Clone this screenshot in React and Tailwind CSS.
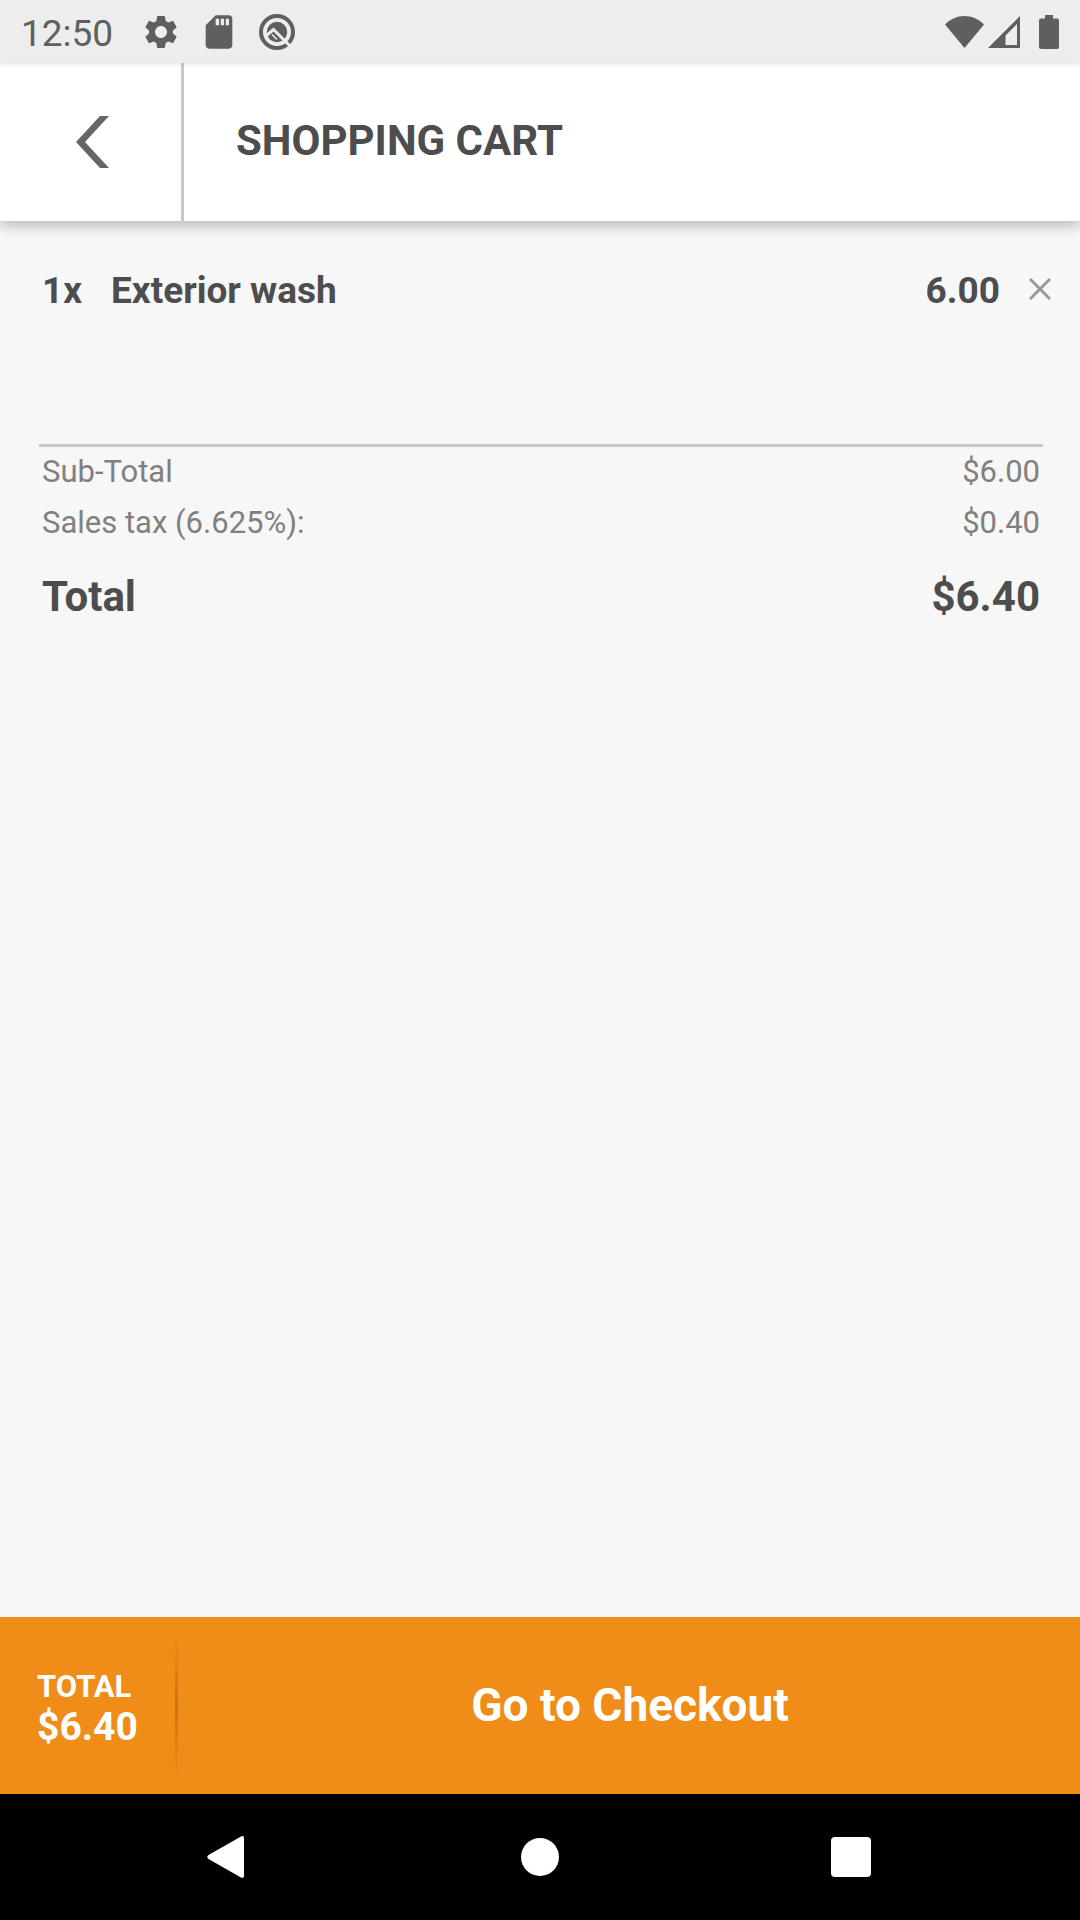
import { MdSettings, MdSdCard } from "react-icons/md";

function StatusBar() {
  return (
    <div className="z-10 flex h-[63px] shrink-0 items-center bg-[#ededed] pr-[21px] pl-[21px] text-[#5f5f5f] shadow-[0_2px_4px_rgba(0,0,0,0.08)]">
      <span className="mt-1 text-[37px] leading-[44px]">12:50</span>
      <MdSettings className="ml-7 size-10" aria-hidden="true" />
      <MdSdCard className="ml-[18px] size-10" aria-hidden="true" />
      <svg className="ml-5 size-9" viewBox="0 0 36 36" fill="none" aria-hidden="true">
        <circle cx="18" cy="18" r="16" stroke="currentColor" strokeWidth="4" />
        <circle cx="18" cy="18" r="10.200" fill="currentColor" />
        <path d="M7.500 21.500L14.500 15.500L31 32" stroke="#ededed" strokeWidth="3" />
        <path d="M13 20.500L18 25.500" stroke="#ededed" strokeWidth="1.500" />
      </svg>
      <div className="ml-auto flex items-center">
        <svg className="h-8 w-[39px]" viewBox="0 0 39 32" fill="currentColor" aria-hidden="true">
          <path d="M0 8.500C5.500 3 12 0 19.500 0S33.500 3 39 8.500L19.500 32Z" />
        </svg>
        <svg className="ml-1 h-8 w-8" viewBox="0 0 32 32" fill="currentColor" aria-hidden="true">
          <path fillRule="evenodd" d="M32 0V32H0ZM29 8L17.500 19.500V29H29Z" />
        </svg>
        <svg className="ml-[19px] h-[34px] w-5" viewBox="0 0 20 34" fill="currentColor" aria-hidden="true">
          <path d="M6 0H14V3.500H18Q20 3.500 20 5.500V32Q20 34 18 34H2Q0 34 0 32V5.500Q0 3.500 2 3.500H6Z" />
        </svg>
      </div>
    </div>
  );
}

function Header() {
  return (
    <header className="flex h-[158px] shrink-0 items-stretch bg-white shadow-[0_4px_14px_rgba(0,0,0,0.28)]">
      <button
        type="button"
        aria-label="Back"
        className="flex w-[184px] items-center justify-center border-r-[3px] border-[#c8c8c8] pl-[3px] text-[#666666]"
      >
        <svg className="h-[52px] w-[33px]" viewBox="0 0 33 52" fill="currentColor" aria-hidden="true">
          <path d="M24 0H33L9 26L33 52H24L0 26Z" />
        </svg>
      </button>
      <h1 className="self-center pb-0.5 pl-[52px] text-[42px] leading-[50px] font-bold">SHOPPING CART</h1>
    </header>
  );
}

function CartItem({ quantity, name, price }) {
  return (
    <li className="flex h-10 items-center text-[37px] leading-[40px] font-bold">
      <span className="w-[69px]">{quantity}x</span>
      <span>{name}</span>
      <span className="ml-auto">{price}</span>
      <button type="button" aria-label={`Remove ${name}`} className="ml-[29px] text-[#999999]">
        <svg className="mb-1 size-[22px]" viewBox="0 0 22 22" stroke="currentColor" strokeWidth="3" aria-hidden="true">
          <path d="M1 1L21 21M21 1L1 21" />
        </svg>
      </button>
    </li>
  );
}

function SummaryRow({ label, value }) {
  return (
    <div className="flex h-[51px] items-center justify-between text-[31px] text-[#808080]">
      <dt>{label}</dt>
      <dd>{value}</dd>
    </div>
  );
}

export default function App() {
  return (
    <div className="flex min-h-screen flex-col bg-[#f7f7f7] font-['Roboto',sans-serif] text-[#4d4d4d]">
      <StatusBar />
      <Header />
      <main className="flex-1">
        <ul className="min-h-[223px] pt-[50px] pr-[29px] pl-[42px]">
          <CartItem quantity={1} name="Exterior wash" price="6.00" />
        </ul>
        <dl className="mr-[37px] ml-[39px] border-t-[3px] border-[#c8c8c8] pr-[3px] pl-[3px]">
          <SummaryRow label="Sub-Total" value="$6.00" />
          <SummaryRow label="Sales tax (6.625%):" value="$0.40" />
          <div className="flex h-[94px] items-center justify-between text-[42px] font-bold">
            <dt>Total</dt>
            <dd>$6.40</dd>
          </div>
        </dl>
      </main>
      <footer className="flex h-[177px] shrink-0 items-center bg-[#f08c18] font-bold text-white">
        <div className="w-[175px] pt-1.5 pl-[37px]">
          <div className="text-[31px] leading-9">TOTAL</div>
          <div className="text-[39px] leading-[44px]">$6.40</div>
        </div>
        <div className="h-[136px] w-[3px] bg-linear-to-b from-transparent via-[#c87414] to-transparent" />
        <button type="button" className="h-full flex-1 pl-0.5 text-[46px]">Go to Checkout</button>
      </footer>
      <nav
        className="grid h-[126px] shrink-0 grid-cols-3 place-items-center bg-black px-[71px] text-white"
        aria-label="System"
      >
        <button type="button" aria-label="Back" className="pr-1">
          <svg className="h-[42px] w-[37px]" viewBox="0 0 37 42" fill="currentColor" aria-hidden="true">
            <path d="M34 .5Q37-1 37 2.500V39.500Q37 43 34 41.500L1.500 23Q-1 21 1.500 19Z" />
          </svg>
        </button>
        <button type="button" aria-label="Home" className="size-[38px] rounded-full bg-white" />
        <button type="button" aria-label="Recent apps" className="pr-1">
          <span className="block size-10 rounded bg-white" />
        </button>
      </nav>
    </div>
  );
}
